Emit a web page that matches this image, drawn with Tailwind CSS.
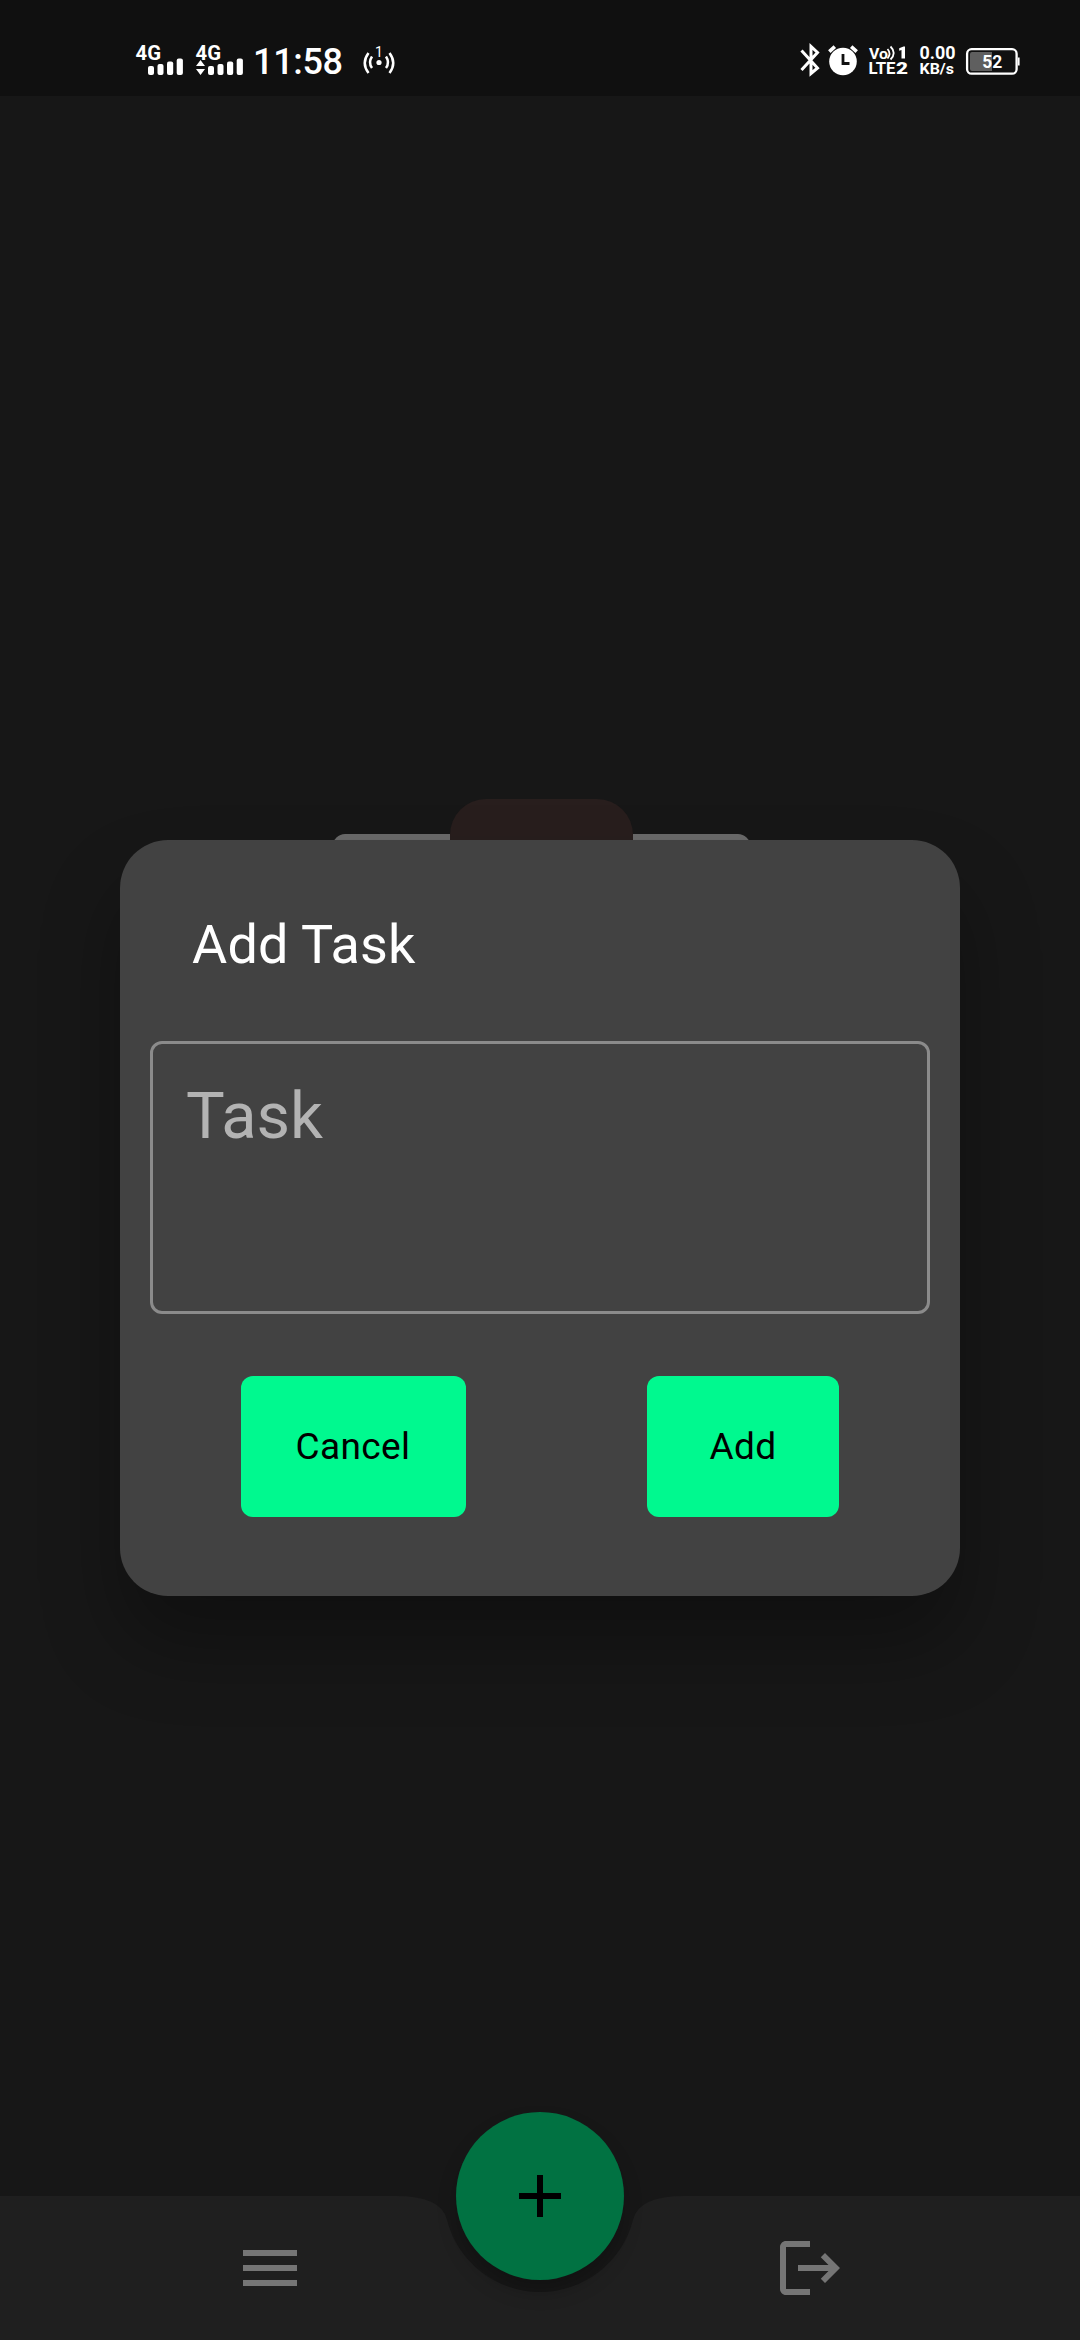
<!DOCTYPE html>
<html lang="en">
<head>
<meta charset="utf-8">
<title>Add Task</title>
<script src="https://cdn.jsdelivr.net/npm/@tailwindcss/browser@4"></script>
</head>
<body class="bg-[#171717]">
<div class="relative flex h-[2340px] w-[1080px] flex-col overflow-hidden bg-[#171717] font-['Roboto',sans-serif]">

  <header class="flex h-24 shrink-0 items-end justify-between bg-[#101010] pr-[58px] pb-4 pl-[134px] text-white">
    <div class="flex">
      <!-- mobile signal, two SIMs -->
      <svg class="h-[44px] w-[116px] overflow-visible" viewBox="134 36 116 44" fill="#fff">
        <text x="135.500" y="59.500" font-size="20.500" font-weight="700" textLength="25.500" lengthAdjust="spacingAndGlyphs">4G</text>
        <rect x="148" y="66" width="6" height="9" rx="2"/><rect x="157.500" y="64" width="6" height="11" rx="2"/><rect x="167" y="61.500" width="6.200" height="13.500" rx="2"/><rect x="176.700" y="58.500" width="6.200" height="16.500" rx="2"/>
        <text x="195.500" y="59.500" font-size="20.500" font-weight="700" textLength="25.500" lengthAdjust="spacingAndGlyphs">4G</text>
        <path d="M200.500 60l4.500 6h-9zM200.500 75l-4.500-6h9z"/>
        <rect x="208" y="66" width="6" height="9" rx="2"/><rect x="217.500" y="64" width="6" height="11" rx="2"/><rect x="227" y="61.500" width="6.200" height="13.500" rx="2"/><rect x="236.700" y="58.500" width="6.200" height="16.500" rx="2"/>
      </svg>
      <svg class="h-[44px] w-[100px]" viewBox="250 36 100 44" fill="#fff">
        <text x="253" y="74" font-size="36" font-weight="500" textLength="90" lengthAdjust="spacing">11:58</text>
      </svg>
      <!-- hotspot with one client -->
      <svg class="h-[44px] w-[50px]" viewBox="350 36 50 44" fill="none" stroke="#fff" stroke-width="2.500">
        <circle cx="379" cy="62.500" r="2.600" fill="#fff" stroke="none"/>
        <path d="M372 56.500q-4 6 0 11.500M386 56.500q4 6 0 11.500M368.500 53q-7.500 10 0 20M389.500 53q7.500 10 0 20"/>
        <text x="375" y="57" font-size="14" fill="#fff" stroke="none">1</text>
      </svg>
    </div>
    <div class="flex">
      <!-- bluetooth, alarm -->
      <svg class="h-[44px] w-[64px]" viewBox="798 36 64 44" fill="none" stroke="#fff">
        <path stroke-width="3" d="M801.500 50.500l16 17.500-6.500 5.500v-27l6.500 6-16 17.500"/>
        <circle cx="843" cy="61.500" r="13.800" fill="#fff" stroke="none"/>
        <path stroke-width="3.600" d="M829.300 51.700l5.500-5M856.700 51.700l-5.500-5"/>
        <path stroke="#101010" stroke-width="2.800" d="M843 54v9.500h6.500"/>
      </svg>
      <!-- VoLTE on both SIMs -->
      <svg class="h-[44px] w-[50px]" viewBox="862 36 50 44" fill="#fff" font-weight="700">
        <text x="869" y="58.500" font-size="15.500" textLength="19" lengthAdjust="spacingAndGlyphs">Vo</text>
        <path fill="none" stroke="#fff" stroke-width="1.800" d="M887.500 49q4 4.500 0 9.500M890.500 46.500q6.500 6.500 0 13"/>
        <path d="M899.200 48.300l4.300-1.800h1.500v12h-3.500v-8.500l-2.300.7z"/>
        <text x="868.500" y="73.500" font-size="17" textLength="27" lengthAdjust="spacingAndGlyphs">LTE</text>
        <text x="896" y="73.500" font-size="17" font-weight="900" textLength="12" lengthAdjust="spacingAndGlyphs">2</text>
      </svg>
      <svg class="h-[44px] w-[50px]" viewBox="912 36 50 44" fill="#fff" font-weight="700">
        <text x="919.500" y="59" font-size="18" textLength="36" lengthAdjust="spacingAndGlyphs">0.00</text>
        <text x="919.500" y="73.700" font-size="15.500" textLength="34.500" lengthAdjust="spacingAndGlyphs">KB/s</text>
      </svg>
      <!-- battery -->
      <svg class="h-[44px] w-[60px]" viewBox="962 36 60 44" fill="none">
        <rect x="967.100" y="49.200" width="49.500" height="24.500" rx="4.500" stroke="#fff" stroke-width="2.300"/>
        <path d="M970 54q0-2 2-2h20v19h-20q-2 0-2-2z" fill="#5f5f5f"/>
        <path d="M1018.700 57.500v8" stroke="#fff" stroke-width="1.800"/>
        <text x="982.300" y="68.300" font-size="18" font-weight="700" fill="#fff" textLength="20" lengthAdjust="spacingAndGlyphs">52</text>
      </svg>
    </div>
  </header>

  <!-- dimmed page with the clipboard illustration -->
  <main class="flex flex-1 flex-col items-center pt-[703px]">
    <div class="ml-0.5 h-28 w-[183px] rounded-t-[36px] bg-[#281e1d]"></div>
    <div class="-mt-[77px] ml-0.5 flex w-[417px] justify-between">
      <div class="h-40 w-[117px] rounded-tl-xl bg-[#6a6a6a]"></div>
      <div class="h-40 w-[117px] rounded-tr-xl bg-[#6a6a6a]"></div>
    </div>
  </main>

  <footer class="relative h-36 shrink-0">
    <svg class="absolute inset-0 h-36 w-full" viewBox="0 0 1080 144" fill="#1f1f1f">
      <path d="M0 0H396Q441 0 446.900 23.400A96 96 0 0 0 633.100 23.400Q639 0 684 0H1080V144H0z"/>
    </svg>
    <nav class="relative grid h-36 grid-cols-2 items-center justify-items-center">
      <svg class="h-[72px] w-[72px]" viewBox="0 0 24 24" fill="#757575"><path d="M3 18h18v-2H3v2zm0-5h18v-2H3v2zm0-7v2h18V6H3z"/></svg>
      <svg class="h-[72px] w-[72px]" viewBox="0 0 24 24" fill="#757575"><path d="M17 7l-1.410 1.410L18.170 11H8v2h10.170l-2.580 2.580L17 17l5-5zM4 5h8V3H4c-1.100 0-2 .9-2 2v14c0 1.100.9 2 2 2h8v-2H4V5z"/></svg>
    </nav>
    <button class="absolute -top-[84px] left-[456px] grid size-[168px] place-items-center rounded-full bg-[#017242] shadow-[0_12px_20px_-2px_rgba(0,0,0,0.25)]">
      <svg class="size-[72px]" viewBox="0 0 24 24"><path d="M19 13h-6v6h-2v-6H5v-2h6V5h2v6h6v2z"/></svg>
    </button>
  </footer>

  <!-- dialog -->
  <div class="absolute inset-x-0 top-24 bottom-0 flex items-center justify-center">
    <section class="flex h-[756px] w-[840px] flex-col rounded-[48px] bg-[#424242] px-[30px] shadow-[0_48px_80px_rgba(0,0,0,0.3)]">
      <h1 class="mt-[73px] ml-[42px] text-[54px] leading-[64px] tracking-[0.15px] text-white">Add Task</h1>
      <div class="mt-[64px] h-[273px] rounded-xl border-[3px] border-[#8b8b8b] pt-[34px] pl-[33px] text-[65px] leading-[77px] text-[#b3b3b3]">Task</div>
      <div class="mt-[61.500px] flex h-[141px] justify-between pr-[91px] pl-[90.500px] text-[37px] tracking-[0.4px] text-black">
        <button class="w-[225px] rounded-xl bg-[#00f98f] pt-0.5">Cancel</button>
        <button class="w-[192px] rounded-xl bg-[#00f98f] pt-0.5">Add</button>
      </div>
    </section>
  </div>
</div>
</body>
</html>
